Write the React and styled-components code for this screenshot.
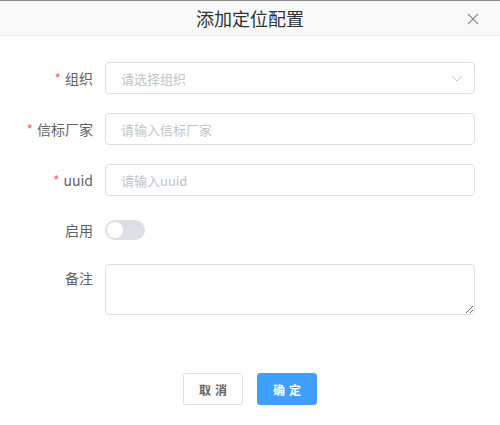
import React from "react";
import styled, { createGlobalStyle } from "styled-components";

const Global = createGlobalStyle`
  html, body { margin: 0; padding: 0; background: #fff; }
  body { font-family: "Noto Sans CJK SC", "Noto Sans", sans-serif; }
  * { box-sizing: border-box; }
`;

const Dialog = styled.div`
  width: 500px;
  height: 425px;
  background: #fff;
  border-top: 1px solid #8c8c8c;
  display: flex;
  flex-direction: column;
`;

const Header = styled.div`
  height: 35px;
  background: #f9f9f9;
  border-bottom: 1px solid #eeeeee;
  display: flex;
  align-items: center;
  justify-content: center;
  position: relative;
`;

const Title = styled.h2`
  margin: 0;
  font-size: 18px;
  font-weight: 400;
  color: #303133;
  line-height: 1;
`;

const Close = styled.button`
  position: absolute;
  right: 20px;
  top: 11px;
  width: 14px;
  height: 14px;
  padding: 0;
  border: none;
  background: none;
  display: flex;
  cursor: pointer;
`;

const Form = styled.form`
  padding: 26px 25px 0 0;
  display: flex;
  flex-direction: column;
  gap: 19px;
`;

const Row = styled.div`
  display: flex;
  align-items: ${(p) => (p.$top ? "flex-start" : "center")};
  min-height: 32px;
  ${(p) => p.$short && "height: 30px; min-height: 0;"}
`;

const Label = styled.label`
  width: 105px;
  padding-right: 12px;
  text-align: right;
  font-size: 14px;
  color: #606266;
  line-height: 32px;
  flex-shrink: 0;
  margin-top: ${(p) => (p.$top ? "-2px" : "0")};
`;

const Star = styled.span`
  color: #f56c6c;
  margin-right: 4px;
`;

const Field = styled.div`
  flex: 1;
  position: relative;
`;

const Input = styled.input`
  width: 100%;
  height: 32px;
  border: 1px solid #dcdfe6;
  border-radius: 4px;
  padding: 0 15px;
  font-size: 13px;
  font-family: inherit;
  color: #606266;
  outline: none;
  &::placeholder { color: #c0c4cc; }
`;

const Chevron = styled.span`
  position: absolute;
  right: 12px;
  top: 10px;
  display: flex;
`;

const Switch = styled.span`
  width: 40px;
  height: 20px;
  border-radius: 10px;
  background: #dcdfe6;
  position: relative;
  display: inline-block;
  &::after {
    content: "";
    position: absolute;
    left: 2px;
    top: 2px;
    width: 16px;
    height: 16px;
    border-radius: 50%;
    background: #fff;
  }
`;

const TextArea = styled.textarea`
  display: block;
  width: 100%;
  height: 51px;
  border: 1px solid #dcdfe6;
  border-radius: 4px;
  padding: 5px 15px;
  font-family: inherit;
  font-size: 13px;
  outline: none;
  resize: vertical;
`;

const Footer = styled.div`
  margin-top: auto;
  padding-bottom: 20px;
  display: flex;
  justify-content: center;
  gap: 14px;
`;

const Button = styled.button`
  width: 60px;
  height: 32px;
  border-radius: 3px;
  font-family: inherit;
  font-size: 12px;
  font-weight: 700;
  letter-spacing: 4px;
  padding: 0 0 0 4px;
  cursor: pointer;
  border: 1px solid ${(p) => (p.$primary ? "#409eff" : "#dcdfe6")};
  background: ${(p) => (p.$primary ? "#409eff" : "#fff")};
  color: ${(p) => (p.$primary ? "#fff" : "#606266")};
`;

export default function App() {
  return (
    <>
      <Global />
      <Dialog>
        <Header>
          <Title>添加定位配置</Title>
          <Close aria-label="close">
            <svg width="14" height="14" viewBox="0 0 14 14">
              <path d="M2 2L12 12M12 2L2 12" stroke="#909399" strokeWidth="1.3" />
            </svg>
          </Close>
        </Header>
        <Form>
          <Row>
            <Label><Star>*</Star>组织</Label>
            <Field>
              <Input placeholder="请选择组织" readOnly />
              <Chevron>
                <svg width="12" height="12" viewBox="0 0 12 12">
                  <path d="M1 4L6 9L11 4" fill="none" stroke="#c0c4cc" strokeWidth="1" />
                </svg>
              </Chevron>
            </Field>
          </Row>
          <Row>
            <Label><Star>*</Star>信标厂家</Label>
            <Field>
              <Input placeholder="请输入信标厂家" />
            </Field>
          </Row>
          <Row>
            <Label><Star>*</Star>uuid</Label>
            <Field>
              <Input placeholder="请输入uuid" />
            </Field>
          </Row>
          <Row $short>
            <Label>启用</Label>
            <Switch />
          </Row>
          <Row $top>
            <Label $top>备注</Label>
            <Field>
              <TextArea />
            </Field>
          </Row>
        </Form>
        <Footer>
          <Button>取消</Button>
          <Button $primary>确定</Button>
        </Footer>
      </Dialog>
    </>
  );
}
